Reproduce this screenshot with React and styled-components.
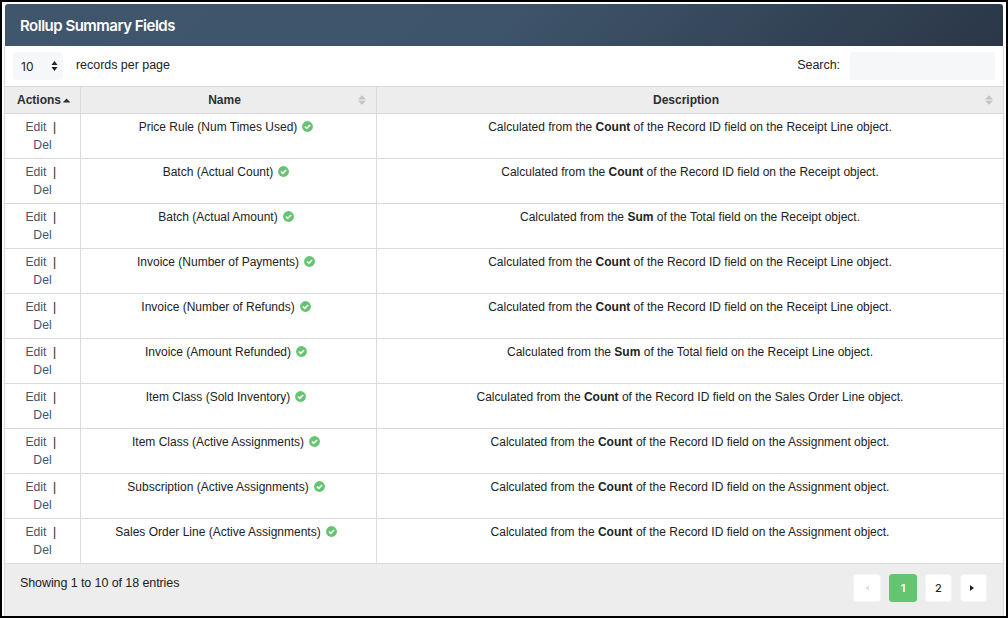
import React from 'react';
import styled, { createGlobalStyle } from 'styled-components';

const GlobalStyle = createGlobalStyle`
  * { box-sizing: border-box; }
  body {
    margin: 0;
    background: #fff;
    font-family: "Liberation Sans", Arial, sans-serif;
    font-size: 12px;
    line-height: 18px;
    color: #222;
  }
`;

const Frame = styled.main`
  width: 1008px;
  height: 618px;
  padding: 2px 2px 0;
  border: 2px solid #000;
  display: flex;
  flex-direction: column;
`;

const Panel = styled.section`
  flex: 1;
  width: 1000px;
  display: flex;
  flex-direction: column;
`;

const PanelHeader = styled.header`
  height: 42px;
  margin: 0 1px;
  padding: 0 15px;
  display: flex;
  align-items: center;
  border-radius: 3px 3px 0 0;
  background: linear-gradient(135deg, #3f566d 0%, #3e546a 50%, #2b3747 100%);
`;

const Title = styled.h1`
  margin: 2px 0 0;
  font: 600 15px/20px Inter, "Liberation Sans", sans-serif;
  letter-spacing: -0.5px;
  color: #fff;
`;

const PanelBody = styled.div`
  flex: 1;
  display: flex;
  flex-direction: column;
  border: solid #dadada;
  border-width: 0 1px;
`;

const Toolbar = styled.div`
  height: 40px;
  padding: 6px 8px 0;
  display: flex;
  align-items: flex-start;
  justify-content: space-between;
`;

const Control = styled.label`
  display: flex;
  line-height: 26px;
  font-size: 12.5px;
  letter-spacing: -0.04px;
`;

const PageSize = styled.button`
  width: 50px;
  height: 28px;
  margin-right: 13px;
  padding: 0 5px 0 8px;
  display: flex;
  align-items: center;
  justify-content: space-between;
  border: 0;
  border-radius: 4px;
  background: #f5f7f9;
  color: #222;
  font: 12px Inter, sans-serif;
`;

const SearchInput = styled.input`
  width: 145px;
  height: 28px;
  margin-left: 10px;
  border: 0;
  border-radius: 2px;
  background: #f5f7f9;
`;

const Table = styled.table`
  width: 998px;
  table-layout: fixed;
  border-spacing: 0;
  border-top: 1px solid #dadada;
`;

const HeadCell = styled.th`
  width: ${(p) => p.$width};
  height: 27px;
  padding: 0;
  border-bottom: 1px solid #dadada;
  background: #ededed;
  color: #2b2f33;
  font-size: 12px;
  line-height: 26px;
  & + & { border-left: 1px solid #dadada; }
`;

const HeadContent = styled.div`
  display: flex;
  align-items: center;
  justify-content: center;
  gap: ${(p) => p.$gap || '0'};
  padding: ${(p) => p.$pad || '0'};
`;

const HeadLabel = styled.span`
  flex: ${(p) => (p.$grow ? 1 : 'none')};
`;

const Cell = styled.td`
  height: 45px;
  padding: 4px ${(p) => p.$padRight || '0'} 4px 0;
  vertical-align: top;
  text-align: center;
  border-bottom: 1px solid #dadada;
  white-space: nowrap;
  & + & { border-left: 1px solid #dadada; }
`;

const ActionLink = styled.a`
  color: #3f566d;
  font-size: 12.2px;
`;

const Check = styled.svg`
  width: 11px;
  height: 11px;
  margin-left: 5px;
  vertical-align: -1px;
`;

const Footer = styled.footer`
  flex: 1;
  padding: 10px 16px 0 15px;
  display: flex;
  align-items: flex-start;
  justify-content: space-between;
  background: #ededed;
`;

const Summary = styled.span`
  font-size: 12.5px;
  line-height: 18px;
  letter-spacing: -0.09px;
`;

const Pager = styled.nav`
  display: flex;
  gap: 8px;
`;

const PageButton = styled.button`
  width: ${(p) => p.$width || '28px'};
  height: 28px;
  padding: 0 ${(p) => p.$padRight || '0'} 0 0;
  display: flex;
  align-items: center;
  justify-content: center;
  border: 1px solid ${(p) => (p.$active ? '#65c471' : '#f3f4f7')};
  border-radius: 3px;
  background: ${(p) => (p.$active ? '#65c471' : '#fff')};
  color: ${(p) => (p.$active ? '#fff' : '#222')};
  font: ${(p) => (p.$active ? 600 : 500)} 11px Inter, sans-serif;
`;

const Glyph = styled.svg`
  display: block;
  flex: none;
`;

const SortIcon = () => (
  <Glyph width="8" height="10" viewBox="0 0 8 10" fill="#c4c4c4">
    <path d="M0 4.5 4 0.3 8 4.5zM0 5.7h8L4 9.8z" />
  </Glyph>
);

const rows = [
  ['Price Rule (Num Times Used)', 'Count', 'Record ID', 'Receipt Line'],
  ['Batch (Actual Count)', 'Count', 'Record ID', 'Receipt'],
  ['Batch (Actual Amount)', 'Sum', 'Total', 'Receipt'],
  ['Invoice (Number of Payments)', 'Count', 'Record ID', 'Receipt Line'],
  ['Invoice (Number of Refunds)', 'Count', 'Record ID', 'Receipt Line'],
  ['Invoice (Amount Refunded)', 'Sum', 'Total', 'Receipt Line'],
  ['Item Class (Sold Inventory)', 'Count', 'Record ID', 'Sales Order Line'],
  ['Item Class (Active Assignments)', 'Count', 'Record ID', 'Assignment'],
  ['Subscription (Active Assignments)', 'Count', 'Record ID', 'Assignment'],
  ['Sales Order Line (Active Assignments)', 'Count', 'Record ID', 'Assignment'],
];

export default function App() {
  return (
    <>
      <GlobalStyle />
      <Frame>
        <Panel>
          <PanelHeader>
            <Title>Rollup Summary Fields</Title>
          </PanelHeader>
          <PanelBody>
            <Toolbar>
              <Control>
                <PageSize>
                  10
                  <Glyph width="7" height="10" viewBox="0 0 7 10" fill="#222">
                    <path d="M0.5 4 3.5 0 6.5 4zM0.5 6h6l-3 4z" />
                  </Glyph>
                </PageSize>
                records per page
              </Control>
              <Control>
                Search:
                <SearchInput />
              </Control>
            </Toolbar>
            <Table>
              <thead>
                <tr>
                  <HeadCell $width="75px">
                    <HeadContent $pad="0 0 0 3px" $gap="1px">
                      <HeadLabel>Actions</HeadLabel>
                      <Glyph width="9" height="5" viewBox="0 0 9 5" fill="#2b2f33">
                        <path d="M0.8 4.5 4.6 0.5 8.4 4.5z" />
                      </Glyph>
                    </HeadContent>
                  </HeadCell>
                  <HeadCell $width="296px">
                    <HeadContent $pad="0 10px 0 10px">
                      <HeadLabel $grow>Name</HeadLabel>
                      <SortIcon />
                    </HeadContent>
                  </HeadCell>
                  <HeadCell>
                    <HeadContent $pad="0 10px 0 10px">
                      <HeadLabel $grow>Description</HeadLabel>
                      <SortIcon />
                    </HeadContent>
                  </HeadCell>
                </tr>
              </thead>
              <tbody>
                {rows.map(([name, operation, field, object]) => (
                  <tr key={name}>
                    <Cell>
                      <ActionLink>Edit</ActionLink>&nbsp; |&nbsp;
                      <br />
                      <ActionLink>Del</ActionLink>
                    </Cell>
                    <Cell $padRight="5px">
                      {name}
                      <Check viewBox="0 0 11 11">
                        <circle cx="5.5" cy="5.5" r="5.4" fill="#65c471" />
                        <path d="m2.9 5.5 1.9 1.9 3.3-3.4" fill="none" stroke="#fff" strokeWidth="1.7" />
                      </Check>
                    </Cell>
                    <Cell>
                      Calculated from the <b>{operation}</b> of the {field} field on the {object} object.
                    </Cell>
                  </tr>
                ))}
              </tbody>
            </Table>
            <Footer>
              <Summary>Showing 1 to 10 of 18 entries</Summary>
              <Pager>
                <PageButton>
                  <Glyph width="4" height="6" viewBox="0 0 4 6" fill="#dfe3ee"><path d="M4 0v6L0 3z" /></Glyph>
                </PageButton>
                <PageButton $active>1</PageButton>
                <PageButton $width="27px">2</PageButton>
                <PageButton $width="27px" $padRight="3px">
                  <Glyph width="4" height="6" viewBox="0 0 4 6" fill="#222"><path d="M0 0v6l4-3z" /></Glyph>
                </PageButton>
              </Pager>
            </Footer>
          </PanelBody>
        </Panel>
      </Frame>
    </>
  );
}
